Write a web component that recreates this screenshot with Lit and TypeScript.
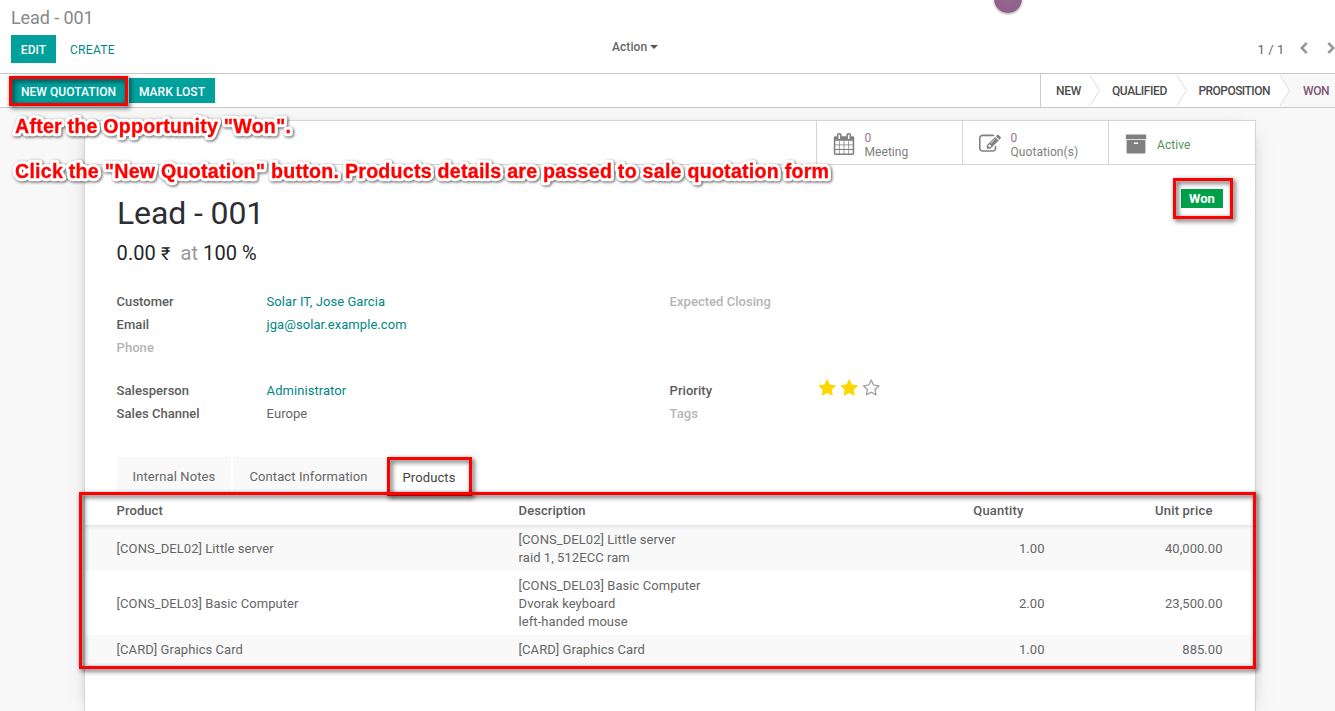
import { LitElement, html, css, svg } from "lit";
import { customElement } from "lit/decorators.js";

const ICONS = {
  calendar:
    "M192 1664h288v-288h-288v288zm352 0h320v-288h-320v288zm-352-352h288v-320h-288v320zm352 0h320v-320h-320v320zm-352-384h288v-288h-288v288zm736 736h320v-288h-320v288zm-384-736h320v-288h-320v288zm768 736h288v-288h-288v288zm-384-352h320v-320h-320v320zm-352-864v-288q0-13-9.5-22.5t-22.5-9.5h-64q-13 0-22.5 9.5t-9.5 22.5v288q0 13 9.5 22.5t22.5 9.5h64q13 0 22.5-9.5t9.5-22.5zm736 864h288v-320h-288v320zm-384-384h320v-288h-320v288zm384 0h288v-288h-288v288zm32-480v-288q0-13-9.5-22.5t-22.5-9.5h-64q-13 0-22.5 9.5t-9.5 22.5v288q0 13 9.5 22.5t22.5 9.5h64q13 0 22.5-9.5t9.5-22.5zm384-64v1280q0 52-38 90t-90 38h-1408q-52 0-90-38t-38-90v-1280q0-52 38-90t90-38h128v-96q0-66 47-113t113-47h64q66 0 113 47t47 113v96h384v-96q0-66 47-113t113-47h64q66 0 113 47t47 113v96h128q52 0 90 38t38 90z",
  edit: "M888 1184l116-116-152-152-116 116v56h96v96h56zm440-720q-16-16-33 1l-350 350q-17 17-1 33t33-1l350-350q17-17 1-33zm80 594v190q0 119-84.5 203.5t-203.5 84.5h-832q-119 0-203.5-84.5t-84.5-203.5v-832q0-119 84.5-203.5t203.5-84.5h832q63 0 117 25 15 7 18 23 3 17-9 29l-49 49q-14 14-32 8-23-6-45-6h-832q-66 0-113 47t-47 113v832q0 66 47 113t113 47h832q66 0 113-47t47-113v-126q0-13 9-22l64-64q15-15 35-7t20 29zm-96-738l288 288-672 672h-288v-288zm444 132l-92 92-288-288 92-92q28-28 68-28t68 28l152 152q28 28 28 68t-28 68z",
  archive:
    "M1088 832q0-26-19-45t-45-19h-256q-26 0-45 19t-19 45 19 45 45 19h256q26 0 45-19t19-45zm576-192v960q0 26-19 45t-45 19h-1408q-26 0-45-19t-19-45v-960q0-26 19-45t45-19h1408q26 0 45 19t19 45zm64-448v256q0 26-19 45t-45 19h-1536q-26 0-45-19t-19-45v-256q0-26 19-45t45-19h1536q26 0 45 19t19 45z",
  star: "M1728 647q0 22-26 48l-363 354 86 500q1 7 1 20 0 21-10.5 35.5t-30.5 14.5q-19 0-40-12l-449-236-449 236q-22 12-40 12-21 0-31.5-14.5t-10.5-35.5q0-6 2-20l86-500-364-354q-25-27-25-48 0-37 56-46l502-73 225-455q19-41 49-41t49 41l225 455 502 73q56 9 56 46z",
  starOutline:
    "M1201 1004l306-297-422-62-189-382-189 382-422 62 306 297-73 421 378-199 377 199zm527-357q0 22-26 48l-363 354 86 500q1 7 1 20 0 50-41 50-19 0-40-12l-449-236-449 236q-22 12-40 12-21 0-31.5-14.5t-10.5-35.5q0-6 2-20l86-500-364-354q-25-27-25-48 0-37 56-46l502-73 225-455q19-41 49-41t49 41l225 455 502 73q56 9 56 46z",
};

const icon = (name: keyof typeof ICONS, cls: string) =>
  html`<svg class=${cls} viewBox="0 0 1792 1792"><path d=${ICONS[name]}></path></svg>`;

const ROWS = [
  { product: "[CONS_DEL02] Little server", description: ["[CONS_DEL02] Little server", "raid 1, 512ECC ram"], qty: "1.00", price: "40,000.00" },
  { product: "[CONS_DEL03] Basic Computer", description: ["[CONS_DEL03] Basic Computer", "Dvorak keyboard", "left-handed mouse"], qty: "2.00", price: "23,500.00" },
  { product: "[CARD] Graphics Card", description: ["[CARD] Graphics Card"], qty: "1.00", price: "885.00" },
];

const NOTES = [
  { y: 23, width: 276, text: 'After the Opportunity "Won".' },
  { y: 68, width: 814, text: 'Click the "New Quotation" button. Products details are passed to sale quotation form' },
];

@customElement("app-root")
export class AppRoot extends LitElement {
  static styles = css`
    :host {
      display: block;
      position: relative;
      width: 1335px;
      height: 711px;
      overflow: hidden;
      background: #f8f8f8;
      color: #666;
      font: 13px/18px Roboto, "Noto Sans", sans-serif;
      letter-spacing: 0.06px;
    }
    * { box-sizing: border-box; }
    .app { display: flex; flex-direction: column; height: 711px; }
    .panel {
      height: 74px;
      flex: none;
      background: #fff;
      border-bottom: 1px solid #c8c8c8;
      padding: 6px 0 0 11px;
    }
    .crumb { font-size: 18px; line-height: 24px; height: 29px; color: #888; letter-spacing: -0.1px; }
    .tools { display: flex; height: 28px; }
    .left { width: 601px; display: flex; }
    .btn {
      display: flex;
      align-items: center;
      justify-content: center;
      background: #00a09d;
      color: #fff;
      font-weight: 500;
      font-size: 12px;
      padding: 2px 0 0 0;
      letter-spacing: 0.05px;
    }
    .edit { width: 45px; height: 28px; }
    .create { padding: 6px 0 0 14px; color: #008784; font-weight: 400; font-size: 12px; letter-spacing: 0.3px; }
    .action { display: flex; height: 24px; align-items: center; font-weight: 500; font-size: 12px; flex: 1; }
    .caret { border: 4px solid transparent; border-top-color: #555; border-bottom: 0; margin-left: 3px; }
    .pager { display: flex; padding-top: 6px; margin-right: 1px; letter-spacing: 0.1px; }
    .count { width: 42.5px; }
    .chev { width: 8px; height: 12px; margin-top: 1px; margin-right: 19px; fill: none; stroke: #999; stroke-width: 2.6; }
    .chev.last { margin-right: -1px; }
    .status {
      height: 34px;
      flex: none;
      display: flex;
      background: #fff;
      border-bottom: 1px solid #c8c8c8;
      padding-left: 11px;
    }
    .actions { display: flex; gap: 3px; padding-top: 4px; flex: 1; }
    .quote { width: 115px; height: 25px; }
    .lost { width: 86px; height: 25px; }
    .stages { display: flex; border-left: 1px solid #ccc; height: 33px; width: 295px; font-size: 12px; color: #4c4c4c; font-weight: 500; letter-spacing: -0.4px; }
    .stage { display: flex; align-items: center; white-space: nowrap; padding-top: 1.5px; }
    .s1 { width: 49px; padding-left: 15px; letter-spacing: -0.3px; }
    .s2 { width: 77px; padding-left: 12px; }
    .s3 { width: 93px; padding-left: 11.5px; letter-spacing: -0.55px; }
    .s4 { padding-left: 13px; flex: 1; background: #f8f8f8; color: #7c5576; }
    .arrow { width: 10px; height: 33px; flex: none; fill: none; stroke: #ddd; }
    .arrow .tail { fill: #f8f8f8; stroke: none; }
    .sheet {
      margin: 12px 79px 0 84px;
      flex: 1;
      background: #fff;
      border: 1px solid #d5d5d5;
      border-bottom: 0;
      box-shadow: 0 5px 20px -12px rgba(0, 0, 0, 0.7);
      display: flex;
      flex-direction: column;
    }
    .stats { display: flex; justify-content: flex-end; height: 44px; flex: none; border-bottom: 1px solid #d5d5d5; }
    .stat { width: 146px; border-left: 1px solid #d5d5d5; padding: 12px 0 0 16px; display: flex; font-size: 12px; line-height: 14px; color: #808080; letter-spacing: 0.06px; }
    .stat:last-child { width: 147px; }
    .glyph { width: 22px; height: 22px; fill: #808080; flex: none; }
    .lines { margin: -2px 0 0 9.5px; }
    .num { color: #a0719a; }
    .active { color: #5a8f5d; margin: 5px 0 0 10px; }
    .badge-row { display: flex; justify-content: flex-end; height: 19px; margin: 24px 31px 0 0; }
    .badge { width: 42px; margin-right: 1px; background: #00a04a; color: #fff; font-weight: 700; font-size: 13px; display: flex; align-items: center; justify-content: center; letter-spacing: 0; }
    .title { font-size: 32px; line-height: 38px; margin: -14px 0 0 32px; color: #2e2e33; font-weight: 400; letter-spacing: -0.12px; }
    .revenue { font-size: 20px; line-height: 24px; height: 24px; margin: 9px 0 0 31.6px; color: #212529; letter-spacing: 0.08px; white-space: pre; }
    .rupee { font-size: 18px; line-height: 1; }
    .muted { color: #999; }
    .fields { display: grid; grid-template-columns: 150px 403px 150px 1fr; grid-auto-rows: 23px; padding: 0 31px 0 31.6px; margin-top: 25px; line-height: 23px; }
    .fields.second { margin-top: 20px; }
    .label { font-weight: 500; color: #5c5c5c; letter-spacing: 0.04px; }
    .label.empty { color: #b5b5b5; }
    .link { color: #008784; }
    .stars { display: flex; gap: 3.2px; margin: 0 0 0 -1.2px; }
    .star { width: 18.4px; height: 18.4px; fill: #ffd700; }
    .star.off { fill: #a0a0a0; }
    .tabs { display: flex; gap: 2px; margin: 32px 0 0 32px; height: 36px; line-height: 40px; }
    .tab { background: #f9f9f9; text-align: center; letter-spacing: 0.1px; }
    .t1 { width: 114px; }
    .t2 { width: 151px; }
    .t3 { width: 86px; background: #fff; color: #444; line-height: 42px; }
    .row { display: grid; grid-template-columns: 402px 300px 226px 178px; align-items: center; padding: 6px 0 4px 31.6px; }
    .row.head { height: 32px; font-weight: 500; color: #5c5c5c; padding: 3px 0 0 31.6px; letter-spacing: 0.06px; }
    .row.odd { background: #f9f9f9; }
    .row.first { box-shadow: inset 0 5px 5px -4px rgba(0, 0, 0, 0.12); }
    .row.final { padding-bottom: 8px; }
    .n { text-align: right; }
    .hq { padding-right: 21px; letter-spacing: 0.2px; }
    .hp { padding-right: 10px; letter-spacing: 0.2px; }
    .bubble {
      position: absolute; left: 994px; top: -15px; width: 28px; height: 28px; border-radius: 50%;
      background: radial-gradient(#966790, #8c5d85); box-shadow: 0 1px 3px rgba(0, 0, 0, 0.35);
    }
    .mark { position: absolute; border: 3px solid #f00; filter: drop-shadow(2px 2px 2.5px rgba(0, 0, 0, 0.75)); }
    .m-quote { left: 9px; top: 76px; width: 119px; height: 30px; }
    .m-won { left: 1173px; top: 178px; width: 60px; height: 41px; }
    .m-tab { left: 387px; top: 457px; width: 85px; height: 39px; }
    .m-table { left: 79px; top: 492px; width: 1177px; height: 177px; }
    .notes { position: absolute; left: 0; top: 110px; width: 850px; height: 85px; filter: drop-shadow(1px 1.5px 1.5px rgba(0, 0, 0, 0.65)); }
    .note { font: bold 19.6px "Liberation Sans", Arial, sans-serif; letter-spacing: 0; fill: #f00; stroke: #f00; stroke-width: 0.3px; }
    .note.halo { fill: #fff; stroke: #fff; stroke-width: 6.5px; stroke-linejoin: round; }
  `;

  private arrow(tail = false) {
    return html`<svg class="arrow" viewBox="0 0 10 33">
      ${tail ? svg`<path class="tail" d="M0 0L10 16.5L0 33H10V0Z"></path>` : ""}
      <path d="M-0.5 0.5L9.5 16.5L-0.5 32.5"></path>
    </svg>`;
  }

  render() {
    return html`
      <div class="app">
        <header class="panel">
          <div class="crumb">Lead - 001</div>
          <div class="tools">
            <div class="left">
              <div class="btn edit">EDIT</div>
              <div class="create">CREATE</div>
            </div>
            <div class="action">Action<span class="caret"></span></div>
            <div class="pager">
              <span class="count">1 / 1</span>
              <svg class="chev" viewBox="0 0 8 12"><path d="M6.7 1L1.8 6L6.7 11"></path></svg>
              <svg class="chev last" viewBox="0 0 8 12"><path d="M1.3 1L6.2 6L1.3 11"></path></svg>
            </div>
          </div>
        </header>
        <div class="status">
          <div class="actions">
            <div class="btn quote">NEW QUOTATION</div>
            <div class="btn lost">MARK LOST</div>
          </div>
          <div class="stages">
            <div class="stage s1">NEW</div>${this.arrow()}
            <div class="stage s2">QUALIFIED</div>${this.arrow()}
            <div class="stage s3">PROPOSITION</div>${this.arrow(true)}
            <div class="stage s4">WON</div>
          </div>
        </div>
        <main class="sheet">
          <div class="stats">
            <div class="stat">${icon("calendar", "glyph")}<div class="lines"><div class="num">0</div><div>Meeting</div></div></div>
            <div class="stat">${icon("edit", "glyph")}<div class="lines"><div class="num">0</div><div>Quotation(s)</div></div></div>
            <div class="stat">${icon("archive", "glyph")}<div class="active">Active</div></div>
          </div>
          <div class="badge-row"><div class="badge">Won</div></div>
          <div class="title">Lead - 001</div>
          <div class="revenue">0.00 <span class="rupee">₹</span> <span class="muted"> at </span>100 %</div>
          <div class="fields">
            <div class="label">Customer</div><div class="link">Solar IT, Jose Garcia</div>
            <div class="label empty">Expected Closing</div><div></div>
            <div class="label">Email</div><div class="link">jga@solar.example.com</div>
            <div></div><div></div>
            <div class="label empty">Phone</div>
          </div>
          <div class="fields second">
            <div class="label">Salesperson</div><div class="link">Administrator</div>
            <div class="label">Priority</div>
            <div class="stars">${icon("star", "star")}${icon("star", "star")}${icon("starOutline", "star off")}</div>
            <div class="label">Sales Channel</div><div>Europe</div>
            <div class="label empty">Tags</div>
          </div>
          <div class="tabs">
            <div class="tab t1">Internal Notes</div>
            <div class="tab t2">Contact Information</div>
            <div class="tab t3">Products</div>
          </div>
          <div class="row head">
            <div>Product</div><div>Description</div><div class="n hq">Quantity</div><div class="n hp">Unit price</div>
          </div>
          ${ROWS.map(
            (r, i) => html`<div class="row ${i % 2 ? "" : "odd"} ${i === 0 ? "first" : ""} ${i === 2 ? "final" : ""}">
              <div>${r.product}</div>
              <div>${r.description.map((d) => html`<div>${d}</div>`)}</div>
              <div class="n">${r.qty}</div>
              <div class="n">${r.price}</div>
            </div>`
          )}
        </main>
      </div>
      <div class="bubble"></div>
      <div class="mark m-quote"></div>
      <div class="mark m-won"></div>
      <div class="mark m-tab"></div>
      <div class="mark m-table"></div>
      <svg class="notes" viewBox="0 0 850 85">
        ${NOTES.map(
          (n) => svg`
            <text class="note halo" aria-hidden="true" x="15" y=${n.y} textLength=${n.width}>${n.text}</text>
            <text class="note" x="15" y=${n.y} textLength=${n.width}>${n.text}</text>`
        )}
      </svg>
    `;
  }
}
